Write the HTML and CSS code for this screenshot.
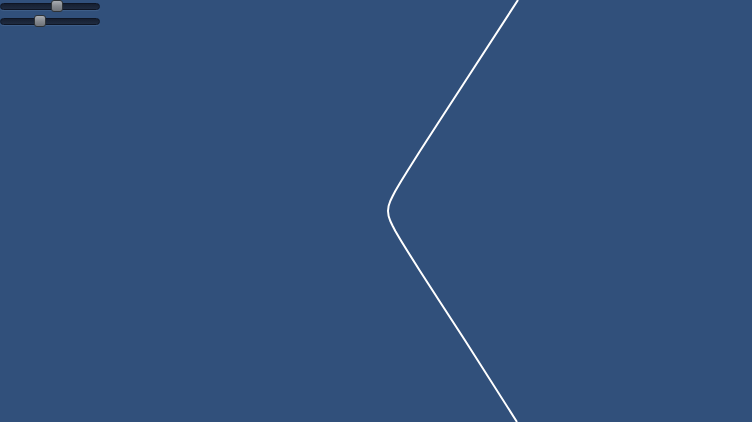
FILE: index.html
```html
<!DOCTYPE html>
<html>
<head>
<meta charset="utf-8">
<link rel="stylesheet" href="styles.css">
</head>
<body>
<div class="stage">
  <div class="controls">
    <div class="slider"><div class="track"></div><div class="thumb" style="left:51px"></div></div>
    <div class="slider"><div class="track"></div><div class="thumb" style="left:34px"></div></div>
  </div>
  <svg class="curve" width="752" height="422" viewBox="0 0 752 422">
    <polyline fill="none" stroke="#ffffff" stroke-width="2" stroke-linejoin="round"
      points="518,0 465.4,81 439.4,121 420,151 407.4,171 401.2,181 395.3,191 392.7,196 390.3,201 388.6,206 388,211 388.6,216 390.3,221 392.7,226 395.3,231 401.2,241 407.4,251 420,271 439.4,301 465.4,341 517,422"/>
  </svg>
</div>
</body>
</html>
```
FILE: styles.css
```css
html, body {
  margin: 0;
  padding: 0;
  background: #31507b;
  font-family: "Liberation Sans", sans-serif;
}
.stage {
  position: relative;
  width: 752px;
  height: 422px;
  overflow: hidden;
}
.controls {
  display: flex;
  flex-direction: column;
  gap: 3px;
  position: relative;
  z-index: 1;
}
.slider {
  position: relative;
  width: 100px;
  height: 12px;
  display: flex;
  align-items: center;
}
.track {
  width: 100px;
  height: 7px;
  box-sizing: border-box;
  border-radius: 4px;
  background: linear-gradient(#161f30, #1f2b40);
  border: 1px solid #0e1524;
  box-shadow: 0 1px 0 rgba(90,120,160,0.35);
}
.thumb {
  position: absolute;
  top: 0;
  width: 12px;
  height: 12px;
  box-sizing: border-box;
  border-radius: 3px;
  border: 1px solid #2e3338;
  background: linear-gradient(#a9adb2, #868a90 50%, #6f7379);
}
.curve {
  position: absolute;
  left: 0;
  top: 0;
}
```
